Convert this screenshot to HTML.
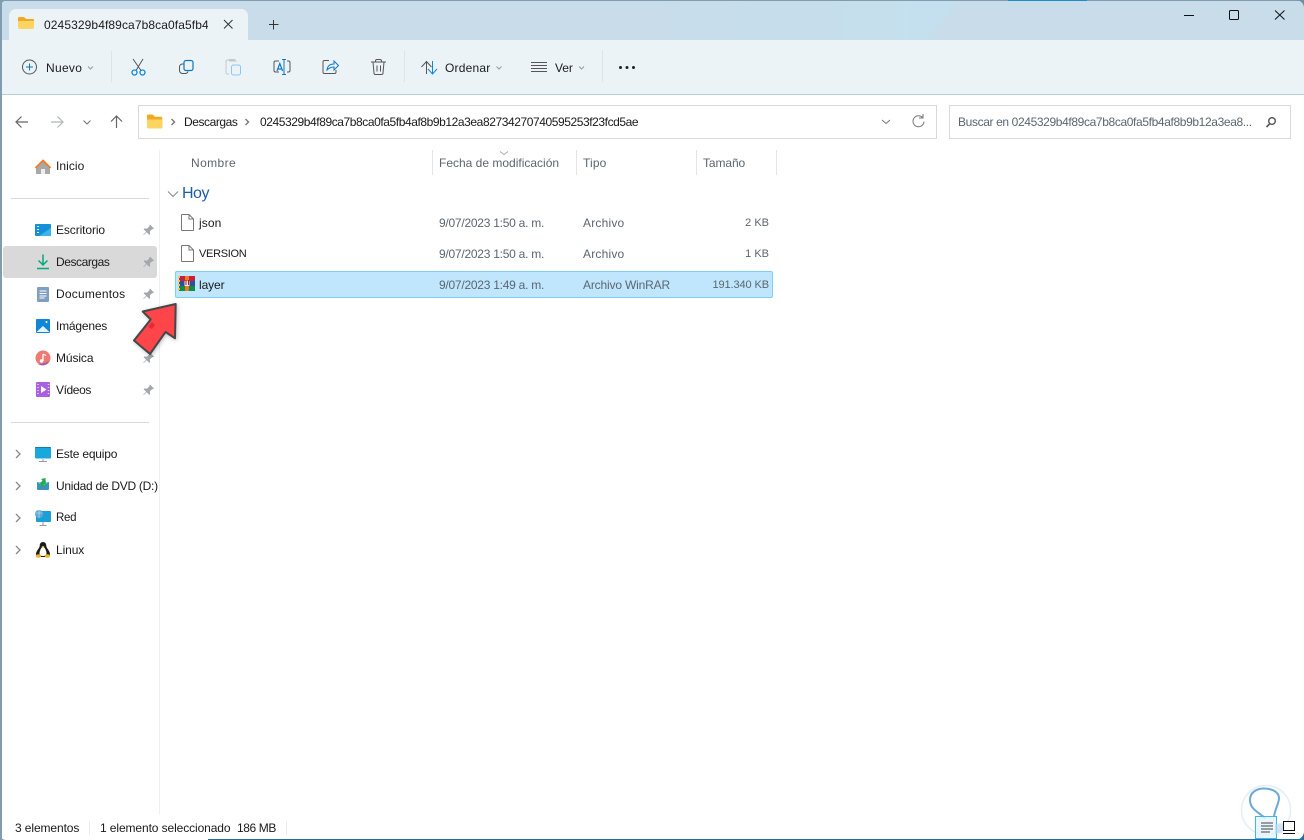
<!DOCTYPE html>
<html><head><meta charset="utf-8"><style>
html,body{margin:0;padding:0;width:1304px;height:840px;overflow:hidden;background:#fff}
body{position:relative;font-family:"Liberation Sans",sans-serif;font-size:12px;color:#1a1a1a}
.a{position:absolute}
.t{position:absolute;white-space:nowrap;line-height:16px;letter-spacing:-.1px}
.g{color:#5b6670}
svg{position:absolute;overflow:visible}
</style></head><body>
<div class="a" style="left:0;top:0;width:1304px;height:40px;background:#c8dcea"></div>
<div class="a" style="left:0;top:0;width:1304px;height:1px;background:#7f9cb0"></div>
<div class="a" style="left:1008px;top:0;width:79px;height:1px;background:#1f8cc8"></div>
<div class="a" style="left:0;top:40px;width:1304px;height:54px;background:#ecf3f7"></div>
<div class="a" style="left:0;top:94px;width:1304px;height:1px;background:#b9cfdc"></div>
<div class="a" style="left:9px;top:9px;width:239px;height:31px;background:#ecf3f7;border-radius:7px 7px 0 0"></div>
<svg style="left:0;top:0" width="1304" height="840">
<defs><linearGradient id="st" x1="0" x2="1" y1="0" y2="0"><stop offset="0" stop-color="#c4e0ee" stop-opacity="0"/><stop offset="1" stop-color="#c4e0ee"/></linearGradient>
<filter id="s" x="-20%" y="-20%" width="150%" height="150%"><feDropShadow dx="1" dy="1" stdDeviation="2" flood-opacity=".25"/></filter>
<g id="pin"><path d="M150.500 225l3.500 3.500-.8.800-1-.2-2.300 2.300.2 2.600-.9.900-2.600-2.600-2.800 2.800-.5-.5 2.800-2.800-2.500-2.500.9-.9 2.600.2 2.300-2.300-.2-1z" fill="#a4a8ac"/></g></defs>
<path d="M620 1H960L927 40H620z" fill="url(#st)"/>
<path d="M18 27V18.500a1.500 1.500 0 0 1 1.500-1.500H24l2 2h7a1 1 0 0 1 1 1V27a2 2 0 0 1-2 2H20a2 2 0 0 1-2-2z" fill="#fcd462"/><path d="M18 21h16v-1a1 1 0 0 0-1-1h-7l-2-2h-4.500A1.500 1.500 0 0 0 18 18.500z" fill="#f3a825"/>
<path d="M224 20l8.500 8.500M232.500 20l-8.500 8.500M269 24.500h9.500M273.500 20v9.500" stroke="#333" fill="none"/>
<path d="M1184 15.500h10" stroke="#111"/><rect x="1229.500" y="10.500" width="9" height="9" rx="1" fill="none" stroke="#111"/><path d="M1275 10.500l9.500 9M1284.500 10.500l-9.500 9" stroke="#111" fill="none"/>
<circle cx="29.500" cy="67" r="7" fill="none" stroke="#555" stroke-width="1"/><path d="M29.500 63.500v7M26 67h7" stroke="#0d78c8" fill="none"/>
<path d="M88 66.500l2.500 2.500 2.500-2.500" stroke="#999" fill="none"/>
<path d="M111.500 51v31M404.500 51v31M602.500 51v31" stroke="#dde3e7"/>
<path d="M133 59l8 11.500M143 59l-7 11.500" stroke="#555" fill="none"/><circle cx="134.500" cy="72.500" r="2.500" fill="none" stroke="#0d88d8" stroke-width="1.300"/><circle cx="142.500" cy="72.500" r="2.500" fill="none" stroke="#0d88d8" stroke-width="1.300"/>
<rect x="184" y="60.500" width="9" height="10" rx="2" fill="#ecf3f7" stroke="#0d78c8" stroke-width="1.200"/><path d="M183.500 64h-1a3 3 0 0 0-3 3v3.500a3 3 0 0 0 3 3h3a3 3 0 0 0 2.500-2" fill="none" stroke="#555"/>
<path d="M229 74h-1.500a1.500 1.500 0 0 1-1.500-1.500v-11a1.500 1.500 0 0 1 1.500-1.500h7a1.500 1.500 0 0 1 1.500 1.500V62" fill="none" stroke="#c2c8cc"/><rect x="231.500" y="65" width="9" height="10" rx="2" fill="none" stroke="#8ac8ee"/><rect x="229" y="59" width="6" height="2.500" fill="#c2c8cc"/>
<path d="M279 61h-3.500a1.500 1.500 0 0 0-1.500 1.500v8a1.500 1.500 0 0 0 1.500 1.500H279M287 61h1.500a1.500 1.500 0 0 1 1.500 1.500v8a1.500 1.500 0 0 1-1.500 1.500H287" fill="none" stroke="#555"/><path d="M282 59.500h4M284 59.500v15M282 74.500h4" stroke="#0d78c8" fill="none"/><path d="M277 71l2.800-7.500 2.800 7.500M278 69h3.600" fill="none" stroke="#0d78c8" stroke-width="1.200"/>
<path d="M329 60.500h-4.500a1.500 1.500 0 0 0-1.500 1.500v10a1.500 1.500 0 0 0 1.500 1.500h10a1.500 1.500 0 0 0 1.500-1.500v-2" fill="none" stroke="#555"/><path d="M327 70c.5-4 3-6 7-6v-3l4.500 4.500-4.500 4.500v-3c-3 0-5 1-7 3z" fill="#ecf3f7" stroke="#0d78c8"/>
<path d="M371 62h15M375.500 62v-1a1.500 1.500 0 0 1 1.500-1.500h3a1.500 1.500 0 0 1 1.500 1.500v1M373 62l1 11a1.500 1.500 0 0 0 1.500 1.500h6a1.500 1.500 0 0 0 1.500-1.500l1-11M377 65.500v6M380.500 65.500v6" fill="none" stroke="#555"/>
<path d="M426.500 74V62M421.500 67l5-5.500 5 5.500" fill="none" stroke="#555"/><path d="M432.500 61v13M428 69l4.500 5 4.500-5" fill="none" stroke="#0d88d8"/>
<path d="M496.500 66.500l2.500 2.500 2.500-2.500M579 66.500l2.500 2.500 2.500-2.500" stroke="#999" fill="none"/>
<path d="M531 62.500h16M531 65.500h16M531 68.500h16M531 71.500h16" stroke="#555"/>
<circle cx="620.500" cy="67.500" r="1.500" fill="#222"/><circle cx="627" cy="67.500" r="1.500" fill="#222"/><circle cx="633.500" cy="67.500" r="1.500" fill="#222"/>
<path d="M28 122H16M21.500 116.500L16 122l5.500 5.500" stroke="#666" stroke-width="1.200" fill="none"/>
<path d="M51 122h12M57.500 116.500L63 122l-5.500 5.500" stroke="#b0b5b8" stroke-width="1.200" fill="none"/>
<path d="M83.500 120.500l3.500 3.500 3.500-3.500" stroke="#777" stroke-width="1.100" fill="none"/>
<path d="M116.500 128v-12M111 121.500l5.500-5.500 5.500 5.500" stroke="#666" stroke-width="1.200" fill="none"/>
<rect x="138.500" y="105.500" width="798" height="33" fill="#fff" stroke="#d9d9d9"/>
<rect x="949.500" y="105.500" width="341" height="33" fill="#fff" stroke="#d9d9d9"/>
<path d="M147 127v-11a1.500 1.500 0 0 1 1.500-1.500h4.500l2 2h6a1.500 1.500 0 0 1 1.500 1.500v9a1.500 1.500 0 0 1-1.500 1.500h-12.500a1.500 1.500 0 0 1-1.500-1.500z" fill="#fcd462"/><path d="M147 119.500h15v-1a1.500 1.500 0 0 0-1.500-1.500h-6l-2-2.500h-4A1.500 1.500 0 0 0 147 116z" fill="#f3a825"/>
<path d="M171.500 119l3 3-3 3M245.500 119l3 3-3 3" stroke="#777" stroke-width="1.400" fill="none"/>
<path d="M882 120l4 3.500 4-3.500" stroke="#777" fill="none"/>
<path d="M922.500 117.500a5.500 5.500 0 1 0 1.500 4" stroke="#777" fill="none"/><path d="M923 114v4h-4" stroke="#777" fill="none"/>
<circle cx="1272" cy="121" r="3.300" fill="none" stroke="#555" stroke-width="1.400"/><path d="M1269.500 124l-3 3" stroke="#555" stroke-width="1.600"/>
<rect x="3" y="246" width="154" height="32" rx="3" fill="#d9d9d9"/>
<path d="M11 198.500h138M11 422.500h138" stroke="#d9d9d9"/>
<path d="M159.500 150v665" stroke="#f0f0f0"/>
<path d="M432.500 150v25M576.500 150v25M696.500 150v25M776.500 150v25" stroke="#e5e5e5"/>
<path d="M36 167l7-6.500 7 6.500v7h-14z" fill="#a9a9a9"/><path d="M35.500 168l7.500-7.500 7.500 7.500" fill="none" stroke="#f47b20" stroke-width="1.800"/><rect x="41" y="169" width="4" height="5" fill="#eee"/>
<rect x="35" y="224" width="16" height="12" rx="1" fill="#1390d8"/><path d="M39 236l12-8v8z" fill="#3fb4ea"/><path d="M37 226.500h2M37 229.500h2M37 232.500h2" stroke="#fff"/>
<path d="M43 254.500v10M38.500 260.500l4.500 4.500 4.500-4.500" fill="none" stroke="#08a57e" stroke-width="1.500"/><path d="M37 268.500h12" stroke="#08a57e" stroke-width="1.500"/>
<rect x="37" y="287" width="12" height="15" rx="1" fill="#7f9fc0"/><path d="M39.500 291h7M39.500 293.500h7M39.500 296h7M39.500 298h5" stroke="#fff"/>
<rect x="36" y="319" width="14" height="14" rx="1" fill="#0f86d6"/><path d="M36.500 332l6.500-6 6.500 6z" fill="#e6f4fd"/><circle cx="46.500" cy="322" r="1" fill="#fff"/>
<circle cx="43" cy="358" r="7.500" fill="#ee7a74"/><path d="M43 354v7" stroke="#fff" stroke-width="1.300"/><circle cx="41.500" cy="361" r="1.700" fill="#fff"/><path d="M43 354l3 1.500" stroke="#fff"/><path d="M38 364c4 0 7-1 11-3a7.500 7.500 0 0 1-11 3z" fill="#9a5db0"/>
<rect x="36" y="382" width="14" height="15" rx="1" fill="#a95fe0"/><path d="M41 386v7l5.500-3.500z" fill="#fff"/><path d="M38 384v11" stroke="#e6d3f6" stroke-dasharray="1 2" stroke-width="1.500"/><path d="M48.500 384v11" stroke="#e6d3f6" stroke-dasharray="1 2" stroke-width="1.500"/>
<path d="M16 450l4 4-4 4M16 482l4 4-4 4M16 514l4 4-4 4M16 546l4 4-4 4" stroke="#888" stroke-width="1.300" fill="none"/>
<rect x="35" y="447" width="16" height="11.500" rx="1" fill="#18a8dc"/><path d="M35 448a1 1 0 0 1 1-1h14a1 1 0 0 1 1 1z" fill="#0c7fb0"/><path d="M43 459v2M39 461.500h8" stroke="#99a" fill="none"/>
<path d="M37 482h12v7a1 1 0 0 1-1 1h-10a1 1 0 0 1-1-1z" fill="#3a93bd"/><path d="M37 482h12l-6 4z" fill="#8fc4de"/><path d="M45.500 478l-4.500 1 1.500 1.500-2.500 3 2 3 1 1 1-3.500 2 1.500z" fill="#1fb04c"/>
<rect x="36" y="511" width="15" height="11" rx="1" fill="#1a9fd8"/><circle cx="39" cy="514" r="4" fill="#5ea6d8"/><path d="M35.500 513h7M39 510v8" stroke="#d0e8f6" stroke-width=".6"/><path d="M43 522v3M39.500 525.500h7" stroke="#999" fill="none"/>
<path d="M43 542c-2.500 0-3.300 2-3.300 4 0 2-3.700 5-3.700 8 0 2 2 3 7 3s7-1 7-3c0-3-3.700-6-3.700-8 0-2-.8-4-3.300-4z" fill="#1c1c1c"/><path d="M43 547c-1.800 0-3.500 4-3.500 6.500 0 1.500 1.500 2.500 3.500 2.500s3.500-1 3.500-2.500c0-2.500-1.700-6.500-3.500-6.500z" fill="#fff"/><ellipse cx="38.500" cy="556" rx="2.700" ry="1.700" fill="#f0b020"/><ellipse cx="47.500" cy="556" rx="2.700" ry="1.700" fill="#f0b020"/><path d="M41.500 546h3l-1.500 1.500z" fill="#f0b020"/>
<use href="#pin"/><use href="#pin" y="32"/><use href="#pin" y="64"/><use href="#pin" y="128"/><use href="#pin" y="160"/>
<path d="M500 151.500l4 3 4-3" stroke="#aaa" fill="none"/>
<path d="M168 191.500l5 5 5-5" stroke="#888" fill="none"/>
<path d="M182 214.500h7l4.500 4.500v11a.5.500 0 0 1-.5.5h-11a.5.500 0 0 1-.5-.5v-15a.5.500 0 0 1 .5-.5z" fill="#fff" stroke="#777"/><path d="M189 214.500V219h4.500" fill="none" stroke="#777"/>
<path d="M182 245.500h7l4.500 4.500v11a.5.500 0 0 1-.5.5h-11a.5.500 0 0 1-.5-.5v-15a.5.500 0 0 1 .5-.5z" fill="#fff" stroke="#777"/><path d="M189 245.500V250h4.500" fill="none" stroke="#777"/>
<rect x="175.500" y="271.500" width="597" height="26" rx="1.500" fill="#bfe6fc" stroke="#80cdf8"/>
<rect x="179" y="276" width="16" height="5" fill="#c8203a"/><rect x="179" y="281" width="16" height="5" fill="#2b4f9e"/><rect x="179" y="286" width="16" height="5" fill="#128a4a"/><rect x="185" y="276" width="4" height="15" fill="#f07a1e"/><rect x="184.500" y="281" width="5" height="5" fill="#f5e9df"/><path d="M179 276v15" stroke="#f2c83a" stroke-width="2" stroke-dasharray="2 2"/><path d="M186 280v5M188.500 280v5" stroke="#b02020"/>
<path d="M175.700 304L142.700 311.500 150.700 319.500 134 340.500 150 354 165.500 332 175 338.300z" fill="#fe4548" stroke="#44474a" stroke-width="2" stroke-linejoin="round" filter="url(#s)"/>
<path d="M148 327l4-5 3 3-3 4z" fill="#e8283a"/>
<circle cx="1266" cy="810" r="24.500" fill="#fff" fill-opacity=".6" stroke="#e4eef6" stroke-width="1.500"/>
<path d="M1265 818C1258 812 1250 809 1250 800 1250 792 1257 788.500 1264 788.500 1272 788.500 1279 792 1279 798 1279 804 1275 808 1274 817" fill="none" stroke="#6aa9d8" stroke-width="2"/>
<rect x="1255.500" y="816.500" width="21" height="22" fill="#e4f4fd" fill-opacity=".8" stroke="#3fb4ee"/>
<path d="M1261 823h12M1261 826h12M1261 829h12M1261 832h9" stroke="#444"/>
<path d="M1275 824l11-1-4 10-7 1z" fill="#bcd9ee" fill-opacity=".7"/>
<rect x="1283.500" y="821.500" width="11" height="9" fill="#fff" stroke="#111"/><path d="M1283 833.500h12" stroke="#111"/>
<path d="M89.500 821v14M286.500 821v14" stroke="#ececec"/>
<path d="M0 835v5h6a6 6 0 0 1-6-5z" fill="#7f9cb0"/>
<path d="M208 839.500h1096" stroke="#1f6fa8"/>
<path d="M1304 832v8h-9a9 9 0 0 0 9-8z" fill="#1f6fa8"/>
<path d="M1296 0h8v8a8 8 0 0 0-8-8z" fill="#6f8ea3"/>
<path d="M0 8V0h8a8 8 0 0 0-8 8z" fill="#7f9cb0"/>
</svg>
<div class="a" style="left:0;top:0;width:2px;height:840px;background:#7f9cb0"></div>
<div class="t" style="left:44px;top:17px;width:164px;overflow:hidden;letter-spacing:.1px">0245329b4f89ca7b8ca0fa5fb4af8b9b12a3ea</div>
<div class="t" style="left:46px;top:60px;letter-spacing:.3px">Nuevo</div>
<div class="t" style="left:445px;top:60px;letter-spacing:.2px">Ordenar</div>
<div class="t" style="left:555px;top:60px">Ver</div>
<div class="t" style="left:184px;top:114px;letter-spacing:-.43px">Descargas</div>
<div class="t" style="left:260px;top:114px;letter-spacing:-.42px">0245329b4f89ca7b8ca0fa5fb4af8b9b12a3ea82734270740595253f23fcd5ae</div>
<div class="t g" style="left:958px;top:114px;letter-spacing:-.37px">Buscar en 0245329b4f89ca7b8ca0fa5fb4af8b9b12a3ea8...</div>
<div class="t" style="left:56px;top:158px;letter-spacing:.05px">Inicio</div>
<div class="t" style="left:56px;top:222px">Escritorio</div>
<div class="t" style="left:56px;top:254px;letter-spacing:-.43px">Descargas</div>
<div class="t" style="left:56px;top:286px;letter-spacing:.2px">Documentos</div>
<div class="t" style="left:56px;top:318px;letter-spacing:-.2px">Imágenes</div>
<div class="t" style="left:56px;top:350px">Música</div>
<div class="t" style="left:56px;top:382px;letter-spacing:-.4px">Vídeos</div>
<div class="t" style="left:56px;top:446px;letter-spacing:-.2px">Este equipo</div>
<div class="t" style="left:56px;top:478px;letter-spacing:-.27px">Unidad de DVD (D:)</div>
<div class="t" style="left:56px;top:510px;font-size:11.5px;letter-spacing:-.3px">Red</div>
<div class="t" style="left:56px;top:542px">Linux</div>
<div class="t g" style="left:191px;top:155px;letter-spacing:.4px">Nombre</div>
<div class="t g" style="left:439px;top:155px;letter-spacing:0">Fecha de modificación</div>
<div class="t g" style="left:583px;top:155px;letter-spacing:.15px">Tipo</div>
<div class="t g" style="left:703px;top:155px">Tamaño</div>
<div class="t" style="left:182px;top:186px;font-size:16px;letter-spacing:-.5px;color:#1c5fa0">Hoy</div>
<div class="t" style="left:199px;top:215px;letter-spacing:.1px">json</div>
<div class="t" style="left:199px;top:246px;font-size:11px;letter-spacing:-.3px">VERSION</div>
<div class="t" style="left:199px;top:277px">layer</div>
<div class="t g" style="left:439px;top:215px;letter-spacing:-.25px">9/07/2023 1:50 a. m.</div>
<div class="t g" style="left:439px;top:246px;letter-spacing:-.25px">9/07/2023 1:50 a. m.</div>
<div class="t g" style="left:439px;top:277px;letter-spacing:-.25px">9/07/2023 1:49 a. m.</div>
<div class="t g" style="left:583px;top:215px;letter-spacing:.2px">Archivo</div>
<div class="t g" style="left:583px;top:246px;letter-spacing:.2px">Archivo</div>
<div class="t g" style="left:583px;top:277px;letter-spacing:-.17px">Archivo WinRAR</div>
<div class="t g" style="right:535px;top:215px;font-size:11px;letter-spacing:0">2 KB</div>
<div class="t g" style="right:535px;top:246px;font-size:11px;letter-spacing:0">1 KB</div>
<div class="t g" style="right:535px;top:277px;font-size:11px;letter-spacing:-.1px">191.340 KB</div>
<div class="t" style="left:15px;top:820px">3 elementos</div>
<div class="t" style="left:100px;top:820px">1 elemento seleccionado</div>
<div class="t" style="left:237px;top:820px;letter-spacing:-.4px">186 MB</div>
</body></html>
